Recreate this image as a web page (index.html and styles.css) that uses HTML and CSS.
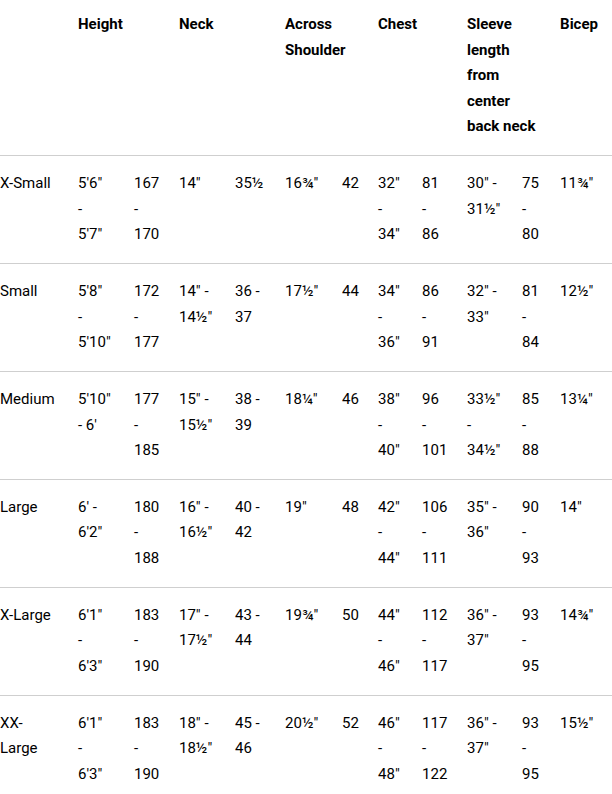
FILE: index.html
```html
<!DOCTYPE html>
<html>
<head>
<meta charset="utf-8">
<link rel="stylesheet" href="styles.css">
</head>
<body>
<table class="size-table">
  <colgroup>
    <col class="c78"><col class="c56"><col class="c45"><col class="c56"><col class="c50"><col class="c57">
    <col class="c36"><col class="c44"><col class="c45"><col class="c55"><col class="c38"><col class="c52">
  </colgroup>
  <thead>
    <tr>
      <th></th>
      <th colspan="2">Height</th>
      <th colspan="2">Neck</th>
      <th colspan="2">Across<br>Shoulder</th>
      <th colspan="2">Chest</th>
      <th colspan="2">Sleeve<br>length<br>from<br>center<br>back neck</th>
      <th>Bicep</th>
    </tr>
  </thead>
  <tbody>
    <tr>
      <td>X-Small</td>
      <td>5'6"<br>-<br>5'7"</td><td>167<br>-<br>170</td>
      <td>14"</td><td>35½</td>
      <td>16¾"</td><td>42</td>
      <td>32"<br>-<br>34"</td><td>81<br>-<br>86</td>
      <td>30" -<br>31½"</td><td>75<br>-<br>80</td>
      <td>11¾"</td>
    </tr>
    <tr>
      <td>Small</td>
      <td>5'8"<br>-<br>5'10"</td><td>172<br>-<br>177</td>
      <td>14" -<br>14½"</td><td>36 -<br>37</td>
      <td>17½"</td><td>44</td>
      <td>34"<br>-<br>36"</td><td>86<br>-<br>91</td>
      <td>32" -<br>33"</td><td>81<br>-<br>84</td>
      <td>12½"</td>
    </tr>
    <tr>
      <td>Medium</td>
      <td>5'10"<br>- 6'</td><td>177<br>-<br>185</td>
      <td>15" -<br>15½"</td><td>38 -<br>39</td>
      <td>18¼"</td><td>46</td>
      <td>38"<br>-<br>40"</td><td>96<br>-<br>101</td>
      <td>33½"<br>-<br>34½"</td><td>85<br>-<br>88</td>
      <td>13¼"</td>
    </tr>
    <tr>
      <td>Large</td>
      <td>6' -<br>6'2"</td><td>180<br>-<br>188</td>
      <td>16" -<br>16½"</td><td>40 -<br>42</td>
      <td>19"</td><td>48</td>
      <td>42"<br>-<br>44"</td><td>106<br>-<br>111</td>
      <td>35" -<br>36"</td><td>90<br>-<br>93</td>
      <td>14"</td>
    </tr>
    <tr>
      <td>X-Large</td>
      <td>6'1"<br>-<br>6'3"</td><td>183<br>-<br>190</td>
      <td>17" -<br>17½"</td><td>43 -<br>44</td>
      <td>19¾"</td><td>50</td>
      <td>44"<br>-<br>46"</td><td>112<br>-<br>117</td>
      <td>36" -<br>37"</td><td>93<br>-<br>95</td>
      <td>14¾"</td>
    </tr>
    <tr>
      <td>XX-<br>Large</td>
      <td>6'1"<br>-<br>6'3"</td><td>183<br>-<br>190</td>
      <td>18" -<br>18½"</td><td>45 -<br>46</td>
      <td>20½"</td><td>52</td>
      <td>46"<br>-<br>48"</td><td>117<br>-<br>122</td>
      <td>36" -<br>37"</td><td>93<br>-<br>95</td>
      <td>15½"</td>
    </tr>
  </tbody>
</table>
</body>
</html>
```
FILE: styles.css
```css
html, body {
  margin: 0;
  padding: 0;
  background: #fff;
}
body {
  font-family: Roboto, "Liberation Sans", sans-serif;
  font-size: 15px;
  line-height: 25.6px;
  color: #000;
}
.size-table {
  width: 612px;
  border-collapse: collapse;
  table-layout: fixed;
}
.c78 { width: 78px; }
.c56 { width: 56px; }
.c45 { width: 45px; }
.c50 { width: 50px; }
.c57 { width: 57px; }
.c36 { width: 36px; }
.c44 { width: 44px; }
.c55 { width: 55px; }
.c38 { width: 38px; }
.c52 { width: 52px; }
.size-table th {
  text-align: left;
  vertical-align: top;
  font-weight: 700;
  padding: 12px 0 15px;
  white-space: nowrap;
}
.size-table td {
  text-align: left;
  vertical-align: top;
  font-weight: 400;
  padding: 15px 0 15.2px;
  border-top: 1px solid #cfcfcf;
  white-space: nowrap;
}
```
